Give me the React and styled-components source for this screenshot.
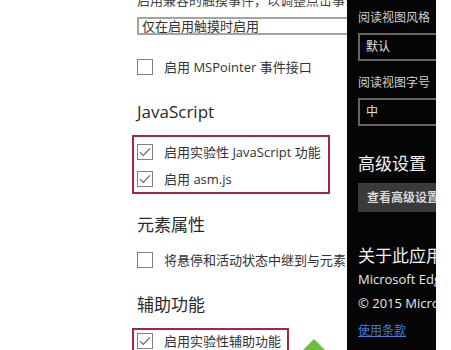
import React from 'react';
import styled, { createGlobalStyle } from 'styled-components';

const GlobalStyle = createGlobalStyle`
  html, body {
    margin: 0;
    padding: 0;
    background: #fff;
  }
  body {
    font-family: "Open Sans", "Noto Sans CJK SC", sans-serif;
  }
`;

const Page = styled.div`
  position: relative;
  display: flex;
  width: 451px;
  height: 350px;
  overflow: hidden;
  background: #fff;
`;

const Blank = styled.div`
  width: 132px;
  flex-shrink: 0;
`;

const Settings = styled.div`
  width: 215px;
  flex-shrink: 0;
  padding-left: 5px;
  box-sizing: border-box;
  overflow: hidden;
  display: flex;
  flex-direction: column;
  align-items: flex-start;
  white-space: nowrap;
  color: #333;
`;

const CutText = styled.div`
  margin-top: -8px;
  font-size: 13px;
  line-height: 16px;
  color: #444;
`;

const Select = styled.div`
  margin-top: 9px;
  width: 240px;
  height: 18px;
  box-sizing: border-box;
  border: 2px solid #a4a4a4;
  padding-left: 3px;
  font-size: 13px;
  line-height: 14px;
  color: #333;
`;

const Row = styled.div`
  display: flex;
  align-items: center;
  gap: 11px;
  height: 16px;
  margin-top: ${p => p.$top || 0}px;
  font-size: 13px;
  line-height: 16px;
  color: #333;
`;

const Box = styled.span`
  width: 16px;
  height: 16px;
  box-sizing: border-box;
  border: 1px solid #808080;
  flex-shrink: 0;
  display: flex;
  align-items: center;
  justify-content: center;
`;

const Heading = styled.div`
  margin-top: ${p => p.$top}px;
  font-size: 17px;
  line-height: 22px;
  color: #2a2a2a;
`;

const Highlight = styled.div`
  margin-top: 12px;
  margin-left: -5px;
  width: ${p => p.$width}px;
  box-sizing: border-box;
  border: 2px solid #a3283e;
  padding: ${p => p.$padTop}px 0 5px 3px;
  display: flex;
  flex-direction: column;
  gap: 11px;
`;

const Dark = styled.div`
  width: 89px;
  flex-shrink: 0;
  background: #050505;
  overflow: hidden;
  padding-left: 11px;
  box-sizing: border-box;
  display: flex;
  flex-direction: column;
  align-items: flex-start;
  white-space: nowrap;
  color: #e6e6e6;
`;

const DarkLabel = styled.div`
  margin-top: ${p => p.$top}px;
  font-size: 12px;
  line-height: 14px;
  color: #d0d0d0;
`;

const DarkSelect = styled.div`
  margin-top: ${p => p.$top}px;
  width: 100px;
  height: 28px;
  box-sizing: border-box;
  border: 2px solid #666;
  padding-left: 6px;
  font-size: 12px;
  line-height: 24px;
  color: #e0e0e0;
`;

const DarkHeading = styled.div`
  margin-top: ${p => p.$top}px;
  font-size: 17px;
  line-height: 25px;
  color: #f2f2f2;
`;

const DarkButton = styled.div`
  margin-top: ${p => p.$top}px;
  width: 100px;
  height: 29px;
  background: #3a3a3a;
  padding-left: 9px;
  box-sizing: border-box;
  font-size: 12px;
  font-weight: 700;
  line-height: 29px;
  color: #d8d8d8;
`;

const DarkText = styled.div`
  margin-top: ${p => p.$top}px;
  font-size: 13px;
  line-height: 18px;
  color: #e8e8e8;
`;

const Link = styled.div`
  margin-top: ${p => p.$top}px;
  font-size: 12px;
  line-height: 16px;
  color: #3d7fd8;
  text-decoration: underline;
`;

const Strip = styled.div`
  flex: 1;
  background: #fff;
`;

const Arrow = styled.svg`
  position: absolute;
  left: 303px;
  top: 339px;
`;

const Check = ({ checked }) => (
  <Box>
    {checked && (
      <svg width="12" height="10" viewBox="0 0 12 10">
        <path d="M1 5.2 L4.3 8.5 L11 1.3" fill="none" stroke="#666" strokeWidth="1.2" />
      </svg>
    )}
  </Box>
);

const App = () => {
  return (
    <Page>
      <GlobalStyle />
      <Blank />
      <Settings>
        <CutText>启用兼容的触摸事件，以调整点击事件</CutText>
        <Select>仅在启用触摸时启用</Select>
        <Row $top={24}>
          <Check />
          启用 MSPointer 事件接口
        </Row>
        <Heading $top={26}>JavaScript</Heading>
        <Highlight $width={198} $padTop={7}>
          <Row>
            <Check checked />
            启用实验性 JavaScript 功能
          </Row>
          <Row>
            <Check checked />
            启用 asm.js
          </Row>
        </Highlight>
        <Heading $top={20}>元素属性</Heading>
        <Row $top={16}>
          <Check />
          将悬停和活动状态中继到与元素关联的标签
        </Row>
        <Heading $top={26}>辅助功能</Heading>
        <Highlight $width={157} $padTop={3}>
          <Row>
            <Check checked />
            启用实验性辅助功能
          </Row>
        </Highlight>
      </Settings>
      <Dark>
        <DarkLabel $top={11}>阅读视图风格</DarkLabel>
        <DarkSelect $top={8}>默认</DarkSelect>
        <DarkLabel $top={15}>阅读视图字号</DarkLabel>
        <DarkSelect $top={8}>中</DarkSelect>
        <DarkHeading $top={25}>高级设置</DarkHeading>
        <DarkButton $top={7}>查看高级设置</DarkButton>
        <DarkHeading $top={31}>关于此应用</DarkHeading>
        <DarkText $top={2}>Microsoft Edge</DarkText>
        <DarkText $top={6}>© 2015 Microsoft</DarkText>
        <Link $top={11}>使用条款</Link>
      </Dark>
      <Strip />
      <Arrow width="22" height="12" viewBox="0 0 22 12">
        <path d="M11 0 L22 11 L0 11 Z" fill="#6cc03c" />
      </Arrow>
    </Page>
  );
};

export default App;
